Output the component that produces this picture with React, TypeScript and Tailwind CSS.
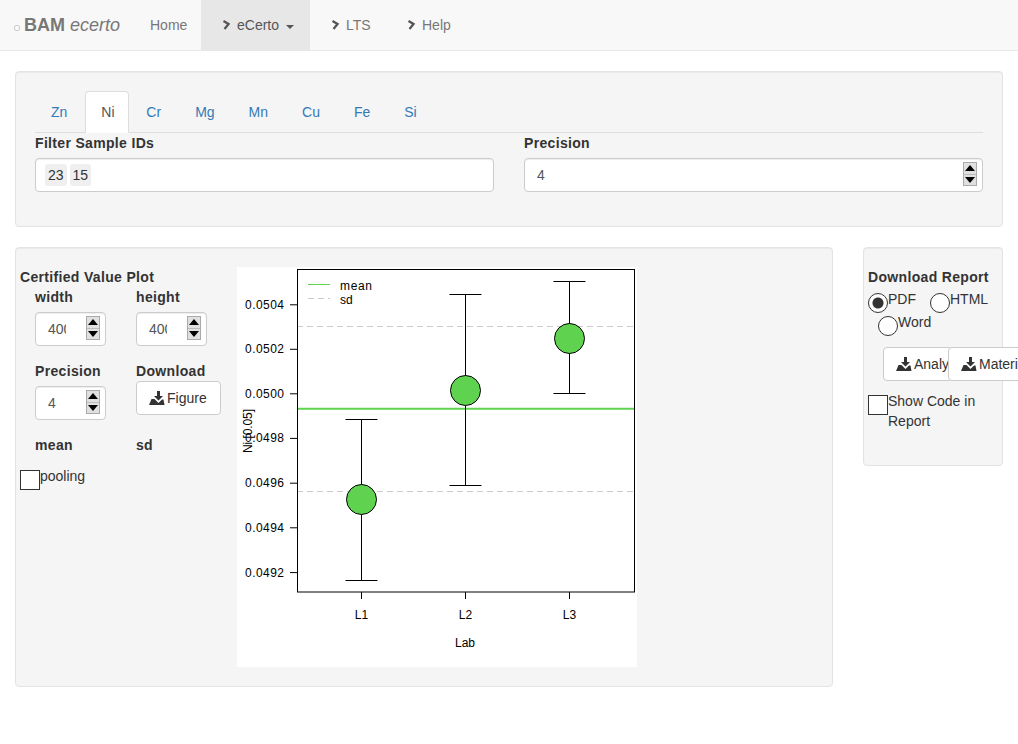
import React from "react";

const tabs = ["Zn", "Ni", "Cr", "Mg", "Mn", "Cu", "Fe", "Si"];
const yTicks = [
  { label: "0.0504", y: 304.8 },
  { label: "0.0502", y: 349.3 },
  { label: "0.0500", y: 393.8 },
  { label: "0.0498", y: 438.4 },
  { label: "0.0496", y: 483.2 },
  { label: "0.0494", y: 527.8 },
  { label: "0.0492", y: 572.6 },
];
const labs = [
  { name: "L1", x: 361.5, top: 419.5, mid: 499.5, bottom: 580.5 },
  { name: "L2", x: 465.5, top: 294.5, mid: 390.5, bottom: 485.5 },
  { name: "L3", x: 569.5, top: 281.5, mid: 338.5, bottom: 393.5 },
];

function Chevron() {
  return (
    <svg width="8" height="10" viewBox="0 0 8 10" className="shrink-0">
      <path d="M1.5 1 L6.5 4 L2.5 9" fill="none" stroke="#555" strokeWidth="2.2" />
    </svg>
  );
}

function SaveIcon() {
  return (
    <svg width="16" height="14" viewBox="0 0 16 14" className="shrink-0">
      <path d="M8 0 H11 V5 H14 L9.5 9.5 L5 5 H8 Z" fill="#333" />
      <path d="M2.5 8 H5.5 L9.5 12 L13 8.5 H14.5 L15.5 14 H0 Z" fill="#333" />
    </svg>
  );
}

function Spinner() {
  return (
    <div className="absolute top-[4px] right-[6px] w-[14px] h-[24px] bg-[#e0e0e0] border border-[#aaa] flex flex-col">
      <div className="flex-1 flex items-center justify-center border-b border-[#bbb]">
        <svg width="10" height="6" viewBox="0 0 10 6"><path d="M5 0 L10 6 H0 Z" fill="#000" /></svg>
      </div>
      <div className="flex-1 flex items-center justify-center">
        <svg width="10" height="6" viewBox="0 0 10 6"><path d="M0 0 H10 L5 6 Z" fill="#000" /></svg>
      </div>
    </div>
  );
}

function NumberBox({ value, narrow }: { value: string; narrow?: boolean }) {
  return (
    <div className={narrow ? "relative w-[71px]" : "relative w-full"}>
      <input
        type="text"
        readOnly
        value={value}
        className={
          "block w-full h-[34px] pl-[12px] border border-[#ccc] rounded bg-white text-[#555] outline-none shadow-[inset_0_1px_1px_rgba(0,0,0,0.075)] " +
          (narrow ? "pr-[39px]" : "pr-[30px]")
        }
      />
      <Spinner />
    </div>
  );
}

function Radio({ checked, label, className }: { checked?: boolean; label: string; className?: string }) {
  return (
    <label className={"flex items-start " + (className ?? "")}>
      <input
        type="radio"
        name="report"
        defaultChecked={checked}
        className="appearance-none mt-[4px] w-[20px] h-[20px] rounded-full border border-[#333] bg-white shrink-0 checked:bg-[radial-gradient(circle,#333_0,#333_5px,#fff_6px)]"
      />
      <span>{label}</span>
    </label>
  );
}

function Plot() {
  return (
    <svg width="400" height="400" viewBox="237 267 400 400" className="block bg-white shrink-0">
      <g fontFamily="Liberation Sans, Arial, sans-serif" fontSize="12" fill="#000">
        <line x1="297" x2="635" y1="326.5" y2="326.5" stroke="#ccc" strokeDasharray="6 4" />
        <line x1="297" x2="635" y1="491.5" y2="491.5" stroke="#ccc" strokeDasharray="6 4" />
        <line x1="297" x2="635" y1="408.8" y2="408.8" stroke="#5fd34f" strokeWidth="2" />

        {labs.map((l) => (
          <g key={l.name} stroke="#000">
            <line x1={l.x} x2={l.x} y1={l.top} y2={l.bottom} />
            <line x1={l.x - 16} x2={l.x + 16} y1={l.top} y2={l.top} />
            <line x1={l.x - 16} x2={l.x + 16} y1={l.bottom} y2={l.bottom} />
            <circle cx={l.x} cy={l.mid} r="15" fill="#5fd34f" />
            <line x1={l.x} x2={l.x} y1="592" y2="599" />
          </g>
        ))}

        <rect x="297.5" y="269.5" width="337" height="322.5" fill="none" stroke="#000" />

        {yTicks.map((t) => (
          <g key={t.label}>
            <line x1="290" x2="297" y1={t.y} y2={t.y} stroke="#000" />
            <text x="284" y={t.y + 4} textAnchor="end" textLength="39">{t.label}</text>
          </g>
        ))}
        {labs.map((l) => (
          <text key={l.name} x={l.x} y="619" textAnchor="middle">{l.name}</text>
        ))}
        <text x="465" y="647" textAnchor="middle">Lab</text>
        <text transform="translate(252 431) rotate(-90)" textAnchor="middle" fontSize="12" textLength="44">Ni [0.05]</text>

        <line x1="308" x2="330" y1="284.5" y2="284.5" stroke="#5fd34f" />
        <line x1="308" x2="330" y1="298.5" y2="298.5" stroke="#ccc" strokeDasharray="6 4" />
        <text x="340" y="290" textLength="32">mean</text>
        <text x="340" y="304">sd</text>
      </g>
    </svg>
  );
}

export default function App() {
  return (
    <div className="min-h-screen overflow-hidden bg-white text-[14px] leading-[20px] text-[#333] font-['Liberation_Sans',Arial,sans-serif]">
      <nav className="h-[51px] flex bg-[#f8f8f8] border-b border-[#e7e7e7] text-[#777]">
        <div className="w-[135px] pl-[14px] flex items-center">
          <span className="w-[6px] h-[6px] mt-[6px] mr-[4px] border border-[#ccc] rounded-[2px]" />
          <span className="text-[18px]">
            <b>BAM</b> <i>ecerto</i>
          </span>
        </div>
        <div className="pl-[15px] w-[66px] flex items-center">Home</div>
        <div className="pl-[21px] w-[109px] flex items-center bg-[#e7e7e7] text-[#555]">
          <Chevron />
          <span className="ml-[7px]">eCerto</span>
          <span className="ml-[7px] mt-[3px] w-0 h-0 border-x-[4px] border-x-transparent border-t-[4px] border-t-[#555]" />
        </div>
        <div className="pl-[21px] w-[76px] flex items-center">
          <Chevron />
          <span className="ml-[7px]">LTS</span>
        </div>
        <div className="pl-[21px] pr-[15px] flex items-center">
          <Chevron />
          <span className="ml-[7px]">Help</span>
        </div>
      </nav>

      <div className="px-[15px] pt-[20px]">
        <section className="h-[156px] px-[19px] pt-[19px] bg-[#f5f5f5] border border-[#e3e3e3] rounded shadow-[inset_0_1px_1px_rgba(0,0,0,0.05)]">
          <ul className="flex h-[42px] border-b border-[#ddd]">
            {tabs.map((t) =>
              t === "Ni" ? (
                <li key={t} className="mr-[1px] w-[44px] h-[42px] px-[15px] py-[10px] border border-[#ddd] border-b-white bg-white text-[#555] rounded-t">
                  {t}
                </li>
              ) : (
                <li key={t} className="mr-[2px] h-[42px] px-[16px] py-[11px] text-[#337ab7]">
                  {t}
                </li>
              ),
            )}
          </ul>
          <div className="grid grid-cols-2 gap-[30px]">
            <div>
              <div className="font-bold tracking-[0.33px] mb-[5px]">Filter Sample IDs</div>
              <div className="h-[34px] flex items-center gap-[3px] pl-[9px] bg-white border border-[#ccc] rounded shadow-[inset_0_1px_1px_rgba(0,0,0,0.075)]">
                <span className="h-[22px] px-[3px] leading-[22px] bg-[#efefef] rounded-[3px]">23</span>
                <span className="h-[22px] px-[3px] leading-[22px] bg-[#efefef] rounded-[3px]">15</span>
              </div>
            </div>
            <div>
              <div className="font-bold tracking-[0.33px] mb-[5px]">Precision</div>
              <NumberBox value="4" />
            </div>
          </div>
        </section>

        <div className="flex items-start gap-[30px] mt-[20px]">
          <section className="w-[818px] h-[440px] flex px-[4px] py-[19px] bg-[#f5f5f5] border border-[#e3e3e3] rounded shadow-[inset_0_1px_1px_rgba(0,0,0,0.05)]">
            <div className="w-[217px] shrink-0">
              <div className="font-bold tracking-[0.33px]">Certified Value Plot</div>
              <div className="pl-[15px] grid grid-cols-[101px_101px]">
                <div>
                  <div className="font-bold tracking-[0.33px] mb-[5px]">width</div>
                  <NumberBox value="400" narrow />
                </div>
                <div>
                  <div className="font-bold tracking-[0.33px] mb-[5px]">height</div>
                  <NumberBox value="400" narrow />
                </div>
                <div className="mt-[15px]">
                  <div className="font-bold tracking-[0.33px] mb-[5px]">Precision</div>
                  <NumberBox value="4" narrow />
                </div>
                <div className="mt-[15px]">
                  <div className="font-bold tracking-[0.33px]">Download</div>
                  <button className="h-[34px] w-[85px] pl-[12px] flex items-center gap-[2px] bg-white border border-[#ccc] rounded">
                    <SaveIcon />
                    Figure
                  </button>
                </div>
                <div className="mt-[15px] font-bold tracking-[0.33px]">mean</div>
                <div className="mt-[15px] font-bold tracking-[0.33px]">sd</div>
              </div>
              <label className="flex items-start mt-[15px]">
                <input type="checkbox" className="appearance-none w-[20px] h-[20px] border border-[#333] bg-white shrink-0" />
                <span className="-mt-[4px]">pooling</span>
              </label>
            </div>
            <Plot />
          </section>

          <section className="w-[140px] h-[219px] shrink-0 px-[4px] py-[19px] bg-[#f5f5f5] border border-[#e3e3e3] rounded shadow-[inset_0_1px_1px_rgba(0,0,0,0.05)]">
            <div className="font-bold tracking-[0.33px] whitespace-nowrap">Download Report</div>
            <div className="flex h-[23px] mt-[2px]">
              <Radio checked label="PDF" />
              <Radio label="HTML" className="ml-[14px]" />
            </div>
            <Radio label="Word" className="ml-[10px]" />
            <div className="flex ml-[15px] mt-[11px]">
              <button className="h-[34px] w-[70px] shrink-0 -mr-[5px] pl-[12px] flex items-center gap-[2px] overflow-hidden whitespace-nowrap bg-white border border-[#ccc] rounded">
                <SaveIcon />
                Analysis
              </button>
              <button className="relative h-[34px] w-[96px] shrink-0 pl-[12px] flex items-center gap-[2px] whitespace-nowrap bg-white border border-[#ccc] rounded">
                <SaveIcon />
                Material
              </button>
            </div>
            <label className="flex items-start mt-[14px]">
              <input type="checkbox" className="appearance-none w-[20px] h-[20px] border border-[#333] bg-white shrink-0" />
              <span className="-mt-[4px]">Show Code in Report</span>
            </label>
          </section>
        </div>
      </div>
    </div>
  );
}
